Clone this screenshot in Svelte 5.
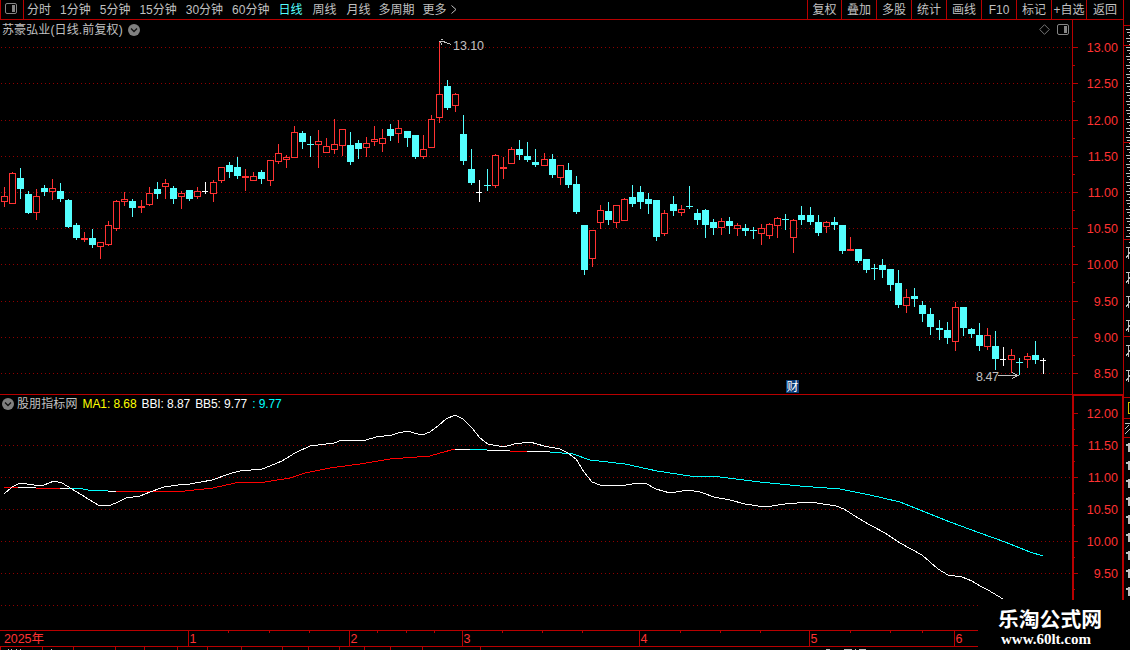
<!--
    App.svelte
    日K线主图 + BBI 副图
-->
<script>
    const periods = ['分时', '1分钟', '5分钟', '15分钟', '30分钟', '60分钟', '日线', '周线', '月线', '多周期', '更多'];
    const tools   = ['复权', '叠加', '多股', '统计', '画线', 'F10', '标记', '+自选', '返回'];

    let active = $state('日线');

    // 每根K线: 颜色(r涨 c跌 w平) 最高 实体上沿 实体下沿 最低
    const raw = `r187,196,202,207 r172,173,204,204 c168,178,189,199 c191,194,213,214 r189,196,213,220
        c185,188,192,196 r179,188,192,200 c183,191,199,202 c199,200,227,228 c223,225,238,240
        r232,238,240,242 c229,238,245,248 r242,242,247,259 r221,225,245,246 r200,201,229,231
        r192,199,202,206 c199,201,208,217 r200,206,208,213 r187,193,205,206 c182,189,194,199
        r179,183,187,199 c186,188,199,204 r191,193,197,209 c190,190,199,201 r187,191,197,199
        w182,191,192,194 r180,182,194,202 r167,167,181,183 c162,165,172,178 c157,167,176,179
        r169,176,178,191 r172,176,181,181 c170,172,179,184 r160,160,181,186 r144,153,162,164
        r155,157,160,168 r126,132,158,158 c131,133,142,149 c136,144,145,157 r130,141,145,168
        r138,146,153,153 r119,144,150,154 r129,129,146,156 c132,145,162,165 c140,143,149,159
        r137,143,148,157 r126,139,142,146 r129,138,144,152 c124,129,136,141 r120,128,134,143
        c131,131,138,147 c135,135,157,159 r135,149,157,159 r115,119,148,148 r42,94,118,123
        c80,86,108,110 r93,94,106,112 c115,134,161,165 c149,169,183,185 w180,192,193,202
        c169,185,186,191 r154,155,186,188 r157,167,169,179 r147,149,164,164 c140,149,155,160
        c142,156,160,162 c149,162,165,167 r153,159,166,166 c154,159,175,178 r165,165,178,185
        c163,170,185,188 c176,184,212,214 c225,225,270,275 r230,230,259,267 r205,210,223,229
        c202,211,220,225 r205,205,223,228 r198,199,221,221 c185,197,204,207 c186,192,202,209
        c193,199,204,214 c200,200,237,241 r210,213,234,236 c196,204,211,216 r205,209,213,216
        c186,206,207,209 c209,213,220,225 c209,210,225,238 c219,222,228,235 r218,221,228,235
        c217,221,226,234 r223,225,229,236 c224,228,231,236 c227,230,231,239 r224,228,234,245
        r223,224,236,239 r217,218,226,238 c214,219,220,230 r219,220,238,253 c206,215,220,225
        c207,215,222,225 c215,222,233,236 r221,222,227,233 c217,222,225,230 c225,225,251,254
        r237,249,251,251 c249,249,261,263 c259,259,270,273 c264,268,269,280 c259,265,270,278
        c269,269,285,291 c270,283,305,308 r289,297,306,313 c288,296,299,307 c301,305,314,322
        c308,314,327,335 c320,328,330,340 c322,330,338,344 r302,307,342,351 c307,307,328,336
        c328,329,334,338 c323,335,346,351 r328,335,347,350 c331,346,359,370 w347,359,360,366
        r349,355,360,373 c358,362,363,375 r353,356,360,368 c341,355,360,364 w358,360,361,374`;

    const candles = raw.trim().split(/\s+/).map((s, i) => {
        const [high, top, bottom, low] = s.slice(1).split(',').map(Number);
        return { kind: s[0], x: Math.floor(4.015 + i * 8.0603), high, top, bottom, low };
    });

    const priceScale = [
        ['13.00', 47], ['12.50', 83], ['12.00', 120], ['11.50', 156], ['11.00', 192],
        ['10.50', 228], ['10.00', 264], ['9.50', 301], ['9.00', 337], ['8.50', 373]
    ];
    const bbiScale = [
        ['12.00', 413], ['11.50', 445], ['11.00', 477], ['10.50', 509], ['10.00', 541], ['9.50', 573]
    ];

    const bbi = '4,494 12,487 20,483 34,485 44,485 54,481 62,483 72,489 85,497 98,505 108,506 116,503 126,498 140,496 150,492 164,487 178,485 190,484 212,480 232,473 240,471 262,469 270,466 282,461 295,453 310,446 334,443 342,440 350,441 366,440 376,437 392,435 398,433 408,431 414,433 422,435 430,432 438,426 446,419 455,415 463,419 472,428 480,438 488,444 504,447 514,444 530,442 544,446 560,449 568,453 576,459 584,472 592,482 600,485 620,486 632,484 645,483 656,489 670,493 688,490 700,492 714,497 730,500 745,504 765,507 785,504 810,502 836,506 844,509 858,518 870,525 885,533 900,543 922,555 938,569 948,575 962,577 972,581 980,586 988,590 1003,599';

    // 均线按走势分段着色
    const ma = [
        ['red',  '4,487 18,487'],
        ['#fff', '18,487 36,488'],
        ['red',  '36,488 60,488'],
        ['#fff', '60,488 69,488'],
        ['#0ff', '69,488 78,488 88,490 108,491'],
        ['#fff', '108,491 116,491'],
        ['red',  '116,491 130,492 145,491 185,491 213,488 235,483 265,482 290,478 305,473 330,468 360,464 390,459 430,456 440,453 455,449'],
        ['#fff', '455,449 470,449'],
        ['#0ff', '470,449 487,450'],
        ['#fff', '487,450 510,451'],
        ['red',  '510,451 527,451'],
        ['#fff', '527,451 550,452'],
        ['#0ff', '550,452 573,454 590,460 625,464 657,471 690,476 720,477 760,482 800,486 840,489 870,495 900,502 930,514 950,522 980,533 1005,542 1030,552 1043,556']
    ];

    const months = [['1', 188], ['2', 349], ['3', 462], ['4', 639], ['5', 809], ['6', 954]];
    const weekTicks = [228, 269, 309, 377, 406, 434, 502, 542, 582, 680, 720, 760, 850, 890, 922];
    const footTicks = [0, 42, 73, 115, 144, 177, 207, 241, 282, 308, 339, 364, 390, 422, 480];
    const sideLines = [25, 45, 142, 239, 336, 397, 418, 437];
    const sideText  = [247, 272, 296, 320, 345, 370];
</script>

{#snippet grid(rows)}
    {#each rows as y}
        <line class="dots" x1="1" x2="1072" y1={y + 0.5} y2={y + 0.5} />
    {/each}
{/snippet}

{#snippet scale(rows, half, last)}
    {#each rows as [label, y], i}
        <rect class="line" x="0" {y} width="6" height="1" />
        {#if i < rows.length - 1 || last}
            <rect class="line" x="0" y={y + half} width="3" height="1" />
        {/if}
        <text class="price" x="46" y={y + 5} text-anchor="end">{label}</text>
    {/each}
{/snippet}

{#snippet layoutIcon()}
    <svg class="layout-icon" width="13" height="12" viewBox="0 0 13 12">
        <rect x=".5" y=".5" width="11" height="10" rx="1.5" fill="none" stroke="#858585" />
        <rect x="7" y="2" width="3" height="7" fill="#858585" />
    </svg>
{/snippet}

{#snippet arrowIcon()}
    <svg width="12" height="12" viewBox="0 0 12 12">
        <circle cx="6" cy="6" r="6" fill="#808080" />
        <path d="M3 4.5 6 7.5 9 4.5" fill="none" stroke="#111" stroke-width="1.3" />
    </svg>
{/snippet}

<div class="app">
    <header class="toolbar">
        <span class="layout-cell">{@render layoutIcon()}</span>
        <nav class="periods">
            {#each periods as p}
                <button class:active={p === active} onclick={() => (active = p)}>{p}</button>
            {/each}
            <svg class="more" width="6" height="9" viewBox="0 0 6 9">
                <path d="M.5 .5 5 4.5 .5 8.5" fill="none" stroke="#c0c0c0" />
            </svg>
        </nav>
        <div class="tools">
            {#each tools as t}
                <button>{t}</button>
            {/each}
        </div>
    </header>

    <div class="body">
        <main>
            <!-- 主图 -->
            <section class="pane price-pane">
                <svg width="1072" height="374" viewBox="0 20 1072 374" shape-rendering="crispEdges">
                    {@render grid(priceScale.map((r) => r[1]))}
                    {#each candles as c}
                        <g class={c.kind}>
                            <rect x={c.x} y={c.high} width="1" height={c.low - c.high} />
                            {#if c.kind === 'r' && c.bottom - c.top > 2}
                                <rect class="hollow" x={c.x - 2.5} y={c.top + 0.5} width="6" height={c.bottom - c.top - 1} />
                            {:else}
                                <rect x={c.x - 3} y={c.top} width={c.kind === 'w' ? 6 : 7} height={c.bottom - c.top} />
                            {/if}
                        </g>
                    {/each}
                    <path class="arrow" d="M439.5 42V40.5M441 39.5H443M440 41.5H443L446 42.5 451 44.5M440 41.5 442 44.5" />
                    <path class="arrow" d="M998 375.5H1018M1012 372.5 1018 375.5 1012 378.5" />
                    <text class="mark" x="453" y="50" textLength="31">13.10</text>
                    <text class="mark" x="976" y="381" textLength="23">8.47</text>
                </svg>
                <div class="pane-head">
                    <span class="title stock">苏豪弘业(日线.前复权)</span>
                    {@render arrowIcon()}
                    <span class="pane-tools">
                        <svg width="11" height="11" viewBox="0 0 11 11">
                            <path d="M5.5 .7 10.3 5.5 5.5 10.3 .7 5.5Z" fill="none" stroke="#777" />
                        </svg>
                        {@render layoutIcon()}
                    </span>
                </div>
                <span class="badge">财</span>
            </section>

            <!-- 副图 -->
            <section class="pane bbi-pane">
                <svg width="1072" height="236" viewBox="0 394 1072 236" shape-rendering="crispEdges">
                    {@render grid([445, 477, 509, 541, 573, 605])}
                    {#each ma as [color, points]}
                        <polyline {points} fill="none" stroke={color} />
                    {/each}
                    <polyline points={bbi} fill="none" stroke="#fff" />
                    <rect class="line" x="0" y="394" width="1072" height="1" />
                </svg>
                <div class="pane-head values">
                    {@render arrowIcon()}
                    <span class="title">股朋指标网</span>
                    <span class="yellow">MA1: 8.68</span>
                    <span class="white">BBI: 8.87</span>
                    <span class="white">BB5: 9.77</span>
                    <span class="cyan">: 9.77</span>
                </div>
            </section>

            <!-- 时间轴 -->
            <svg class="time-axis" width="1072" height="20" viewBox="0 630 1072 20" shape-rendering="crispEdges">
                <rect class="line" x="0" y="630" width="1072" height="1" />
                <rect class="line" x="0" y="646" width="1072" height="1" />
                <text class="price" x="4" y="643" textLength="40">2025年</text>
                {#each months as [m, x]}
                    <rect class="line" {x} y="630" width="1" height="17" />
                    <text class="price" x={x + 1.5} y="643">{m}</text>
                {/each}
                {#each weekTicks as x}
                    <rect class="line" {x} y="631" width="1" height="2" />
                {/each}
                {#each footTicks as x}
                    <rect class="line" {x} y="647" width="1" height="3" />
                {/each}
                <path class="scrap" d="M8 649.5h1M11 649.5h1M16 649.5h1M20 649.5h1M51 649.5h1M826 649.5h4M844 649.5h8M855 649.5h1M859 649.5h7" />
            </svg>
        </main>

        <!-- 价格刻度 -->
        <svg class="scale" width="52" height="630" viewBox="0 20 52 630" shape-rendering="crispEdges">
            <rect class="line" x="0" y="20" width="1" height="374" />
            <rect class="line" x="51" y="20" width="1" height="374" />
            <rect x="1" y="395" width="50" height="240" fill="none" stroke="#b80000" stroke-width="2" />
            {@render scale(priceScale, 18, false)}
            {@render scale(bbiScale, 16, true)}
        </svg>

        <!-- 右侧被裁切的栏 -->
        <svg class="side" width="6" height="630" viewBox="1124 20 6 630" shape-rendering="crispEdges">
            {#each Array(24) as _, i}
                <path class="scrap" d="M1126 {29.5 + i * 9}h4M1127 {32.5 + i * 9}h3M1129 {35.5 + i * 9}h1" />
            {/each}
            {#each sideText as y}
                <path class="scrap" d="M1126 {y}h4M1128.5 {y}v12M1130 {y + 5}l-4 6" />
            {/each}
            <rect x="1128.5" y="402.5" width="5" height="11" fill="none" stroke="#d0c000" />
            <path class="scrap" d="M1125 423.5h5M1129 425l-4 4M1125 434l5-5" />
            {#each Array(10) as _, i}
                <rect x="1128" y={443 + i * 18} width="2" height="9" fill="#c0c0c0" />
                <rect x="1126" y={444 + i * 18} width="2" height="2" fill="#c0c0c0" />
            {/each}
            {#each sideLines as y}
                <rect class="line" x="1124" {y} width="6" height="1" />
            {/each}
        </svg>
    </div>

    <div class="brand">
        <strong>乐淘公式网</strong>
        <b>www.60lt.com</b>
    </div>
</div>

<style>
:global(body) { background: #000; }
.app {
    position: relative; width: 1130px; height: 650px; overflow: hidden;
    background: #000; color: #c0c0c0;
    font: 12px/19px "Liberation Sans", "Noto Sans CJK SC", sans-serif;
}
svg { display: block; flex: none; }
button {
    padding: 1px 0 0; border: 0; background: none; color: inherit;
    font: inherit; white-space: nowrap; cursor: pointer;
}
.toolbar {
    display: flex; width: 1123px; height: 19px; line-height: 18px;
    border-bottom: 1px solid #b80000; border-right: 1px solid #b80000;
}
.layout-cell {
    width: 24px; padding: 3px 0 0 4px; box-sizing: border-box;
    border-left: 1px solid #b80000; border-right: 1px solid #b80000;
}
.periods { display: flex; align-items: center; gap: 9px; margin-left: 3px; }
.periods button:nth-child(8), .periods button:nth-child(9) { margin-left: 1px; }
.periods button:nth-child(10) { margin-left: -1px; }
.periods button:nth-child(11) { margin-left: -1px; }
.periods .active { color: #54ffff; }
.more { margin-left: -5px; }
.tools { display: flex; margin-left: auto; }
.tools button { width: 35px; box-sizing: border-box; border-left: 1px solid #b80000; }
.tools button:first-child { width: 34px; }
.tools button:last-child { width: 37px; }

.body { display: flex; }
main { width: 1072px; }
.pane { position: relative; }
.price-pane { height: 374px; }
.bbi-pane { height: 236px; }
/* 图表上方的标题行 */
.pane-head {
    position: absolute; top: 0; left: 2px; right: 2px; height: 19px;
    display: flex; align-items: center; gap: 5px;
}
.pane-head span { padding-top: 1px; }
.stock { letter-spacing: .12px; }
.pane-tools { display: flex; gap: 7px; margin-left: auto; }
.values { letter-spacing: -.08px; }
.values .title { margin-left: -2px; letter-spacing: .1px; }
.yellow { color: #ff0; }
.white { color: #fff; }
.cyan { color: #0ff; }
.badge {
    position: absolute; left: 786px; top: 360px; width: 13px; height: 13px;
    background: #0a3c78; color: #fff; font-size: 12px; line-height: 14px; text-align: center;
}

.line { fill: #b80000; }
.dots { stroke: #900000; stroke-dasharray: 1 3; }
.r { fill: #ff3232; }
.c { fill: #54ffff; }
.w { fill: #fff; }
.hollow { fill: #000; stroke: #ff3232; }
.arrow, .scrap { fill: none; stroke: #c0c0c0; }
.mark { fill: #c0c0c0; font-size: 12.5px; }
.price { fill: #ff3232; font-size: 12.5px; }

/* 右下角水印 */
.brand {
    position: absolute; left: 978px; top: 600px; width: 152px; height: 50px;
    display: flex; flex-direction: column; align-items: flex-start;
    box-sizing: border-box; padding: 5px 0 0 20px;
    background: #000; color: #fff;
}
.brand strong { font: bold 20.8px/27px "Noto Sans CJK SC", sans-serif; }
.brand b { margin-left: 3px; font: bold 15px/15px "Liberation Serif", serif; }
</style>
